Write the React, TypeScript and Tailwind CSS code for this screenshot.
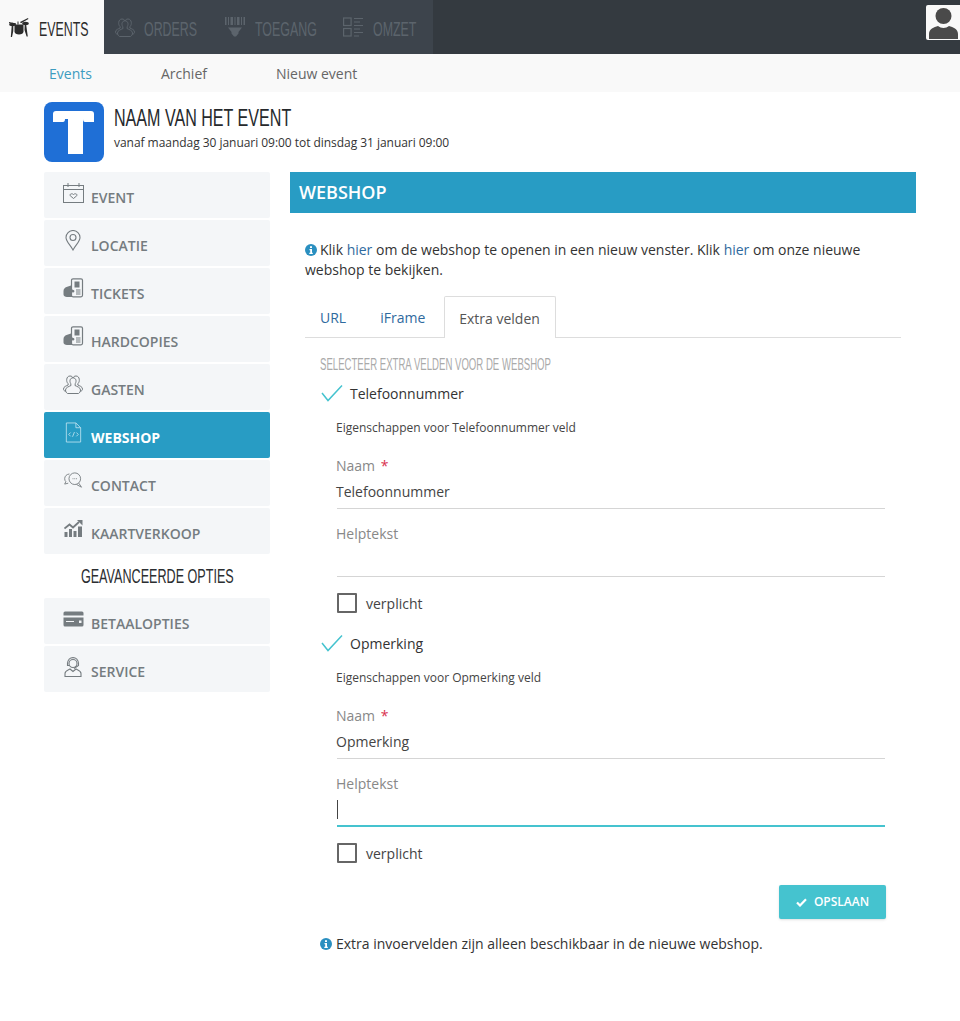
import React from "react"

function CalendarIcon() {
  return (
    <svg width="21" height="20" viewBox="0 0 21 20" fill="none" stroke="currentColor" strokeWidth="1">
      <rect x="0.5" y="2.5" width="20" height="17" />
      <path d="M0.5 6.5h20M5 0v4M16 0v4" />
      <path d="M10.500 15.500l-3.300-2.800c-1-1.400 1.500-2.800 3.300-1.200 1.800-1.600 4.300-.2 3.300 1.200z" />
    </svg>
  )
}

function PinIcon() {
  return (
    <svg width="16" height="21" viewBox="0 0 16 21" fill="none" stroke="currentColor" strokeWidth="1.1">
      <path d="M8 20C5 14.500 1 11.500 1 7.500a7 7 0 0 1 14 0C15 11.500 11 14.500 8 20z" />
      <circle cx="8" cy="7.500" r="3" />
    </svg>
  )
}

function TicketIcon() {
  return (
    <svg width="21" height="21" viewBox="0 0 21 21">
      <rect x="8.500" y="0.800" width="11" height="18" rx="1.500" fill="#f4f6f8" stroke="currentColor" strokeWidth="1.200" />
      <rect x="11.500" y="3.500" width="5" height="6" fill="currentColor" />
      <path d="M13 12h4.500M13 14h4.500M13 16h4.500" stroke="currentColor" strokeWidth="1" />
      <path d="M0.500 13c0-2 1.500-3.500 3-4L8 7.500v3.500l3 1.200c1 .8 0 2.500-1 2.200l-1-.2V19H4c-2 0-3.500-1-3.500-2.500z" fill="currentColor" />
    </svg>
  )
}

function GuestsIcon() {
  return (
    <svg width="20" height="19" viewBox="0 0 20 19" fill="none" stroke="currentColor" strokeWidth="1">
      <path d="M5 8.500C3 7 3 1 7 1c1.500 0 2.500.8 3 1.800C10.500 1.800 11.500 1 13 1c4 0 4 6 2 7.500" />
      <path d="M10 2.800c-3 0-3.800 3.500-2.300 5.700l.3 2c-2 1-5.500 2-5.500 4.500 0 1.500 1 3 2 3.500h11c1-.5 2-2 2-3.500 0-2.500-3.500-3.500-5.500-4.500l.3-2c1.500-2.200.7-5.700-2.300-5.700z" />
      <path d="M5 8.500l.2 1.500c-1.500.8-4.700 1.500-4.700 4 0 1 .5 1.800 1.500 2h1M15 8.500l-.2 1.500c1.500.8 4.700 1.500 4.700 4 0 1-.5 1.800-1.500 2h-1" />
    </svg>
  )
}

function CodeFileIcon() {
  return (
    <svg width="17" height="21" viewBox="0 0 17 22" fill="none" stroke="currentColor" strokeWidth="0.800">
      <path d="M1 1h10l5 5v15H1zM11 1v5h5" />
      <path d="M5.500 11l-2 2 2 2M11.500 11l2 2-2 2M9.500 10.500l-2 5" />
    </svg>
  )
}

function ChatIcon() {
  return (
    <svg width="20" height="17" viewBox="0 0 20 19" fill="none" stroke="currentColor" strokeWidth="1">
      <path d="M6 2.200C3 2.500.700 4.500.700 7.500c0 1.500.5 2.500 1.300 3.300L.700 13.500l4-1" />
      <circle cx="12" cy="7.500" r="6.500" />
      <path d="M16.500 12.500l3 4.500-5.500-3" />
      <path d="M9.500 7.500h1M11.500 7.500h1M13.500 7.500h1" />
    </svg>
  )
}

function ChartIcon() {
  return (
    <svg width="19" height="17" viewBox="0 0 19 17" fill="currentColor">
      <path d="M0.500 8.500L5.500 4.500l3.500 3L15 2" fill="none" stroke="currentColor" strokeWidth="1.800" />
      <path d="M13 0h5.500v5.500z" />
      <path d="M0.500 12h3v5h-3zM5 9h3v8H5zM9.500 11h3v6h-3zM14 6.500h4V17h-4z" />
    </svg>
  )
}

function CardIcon() {
  return (
    <svg width="21" height="16" viewBox="0 0 21 16" fill="currentColor">
      <path d="M2 0.500h17a1.500 1.500 0 0 1 1.500 1.500v2.500H.500V2A1.500 1.500 0 0 1 2 0.500z" />
      <path fillRule="evenodd" d="M0.500 6.500h20V14a1.500 1.500 0 0 1-1.500 1.500H2A1.500 1.500 0 0 1 .500 14zM3 10h8v1H3zm13-.500h2.500V12H16z" />
    </svg>
  )
}

function ServiceIcon() {
  return (
    <svg width="18" height="20" viewBox="0 0 18 20" fill="none" stroke="currentColor" strokeWidth="1.100">
      <circle cx="9" cy="6.500" r="4" />
      <path d="M3.500 7c0-8.500 11-8.500 11 0M3.500 5.500v3h2M14.500 5.500v3L10 11.500" />
      <path d="M6 12c-1.500 1-5 1.500-5 4.500v3h16v-3c0-3-3.500-3.500-5-4.500l-3 2.500z" />
    </svg>
  )
}

function DrumIcon() {
  return (
    <svg width="20" height="20" viewBox="0 0 20 20" fill="#2b2b2b">
      <path d="M0 5l7 1.500v1L0 6.200zM11 5l8-4 .4.900L12 6.300zM8.500 4.500h1v3h-1z" />
      <ellipse cx="3.500" cy="7.500" rx="3.300" ry="1.700" />
      <ellipse cx="16.500" cy="6.500" rx="3.300" ry="1.700" />
      <path d="M5.500 7.500h9v7c0 2-2 3-4.500 3s-4.500-1-4.500-3z" />
      <path d="M2.800 8h1.500v6L3 20H1.800zM15.700 8h1.500l1.600 11.500h-1.200L15.500 13z" />
    </svg>
  )
}

function BarcodeIcon() {
  return (
    <svg width="20" height="20" viewBox="0 0 20 20" fill="currentColor">
      <path d="M0 0h1.500v8H0zM3 0h1v8H3zM5.500 0h2.500v8H5.500zM9.500 0h1v8h-1zM12 0h2.500v8H12zM16 0h1v8h-1zM18.500 0H20v8h-1.500z" />
      <path d="M3 10.500h14l-3.500 4.500v1.500L11 19.500H9L6.500 16.500V15z" />
    </svg>
  )
}

function RevenueIcon() {
  return (
    <svg width="21" height="20" viewBox="0 0 21 20" fill="none" stroke="currentColor" strokeWidth="1.200">
      <rect x="0.600" y="1" width="7.500" height="7.500" />
      <rect x="0.600" y="11.500" width="7.500" height="7.500" />
      <path d="M11 1.500h9M11 5h6M11 8.500h9M11 12h6M11 15.500h9M11 19h5" />
    </svg>
  )
}

function InfoDot({ className }: { className: string }) {
  return (
    <svg width="12" height="12" viewBox="0 0 12 12" className={`inline-block mb-[2px] ${className}`}>
      <circle cx="6" cy="6" r="6" fill="#2a8fc0" />
      <path d="M5 2.200h2v1.800H5zM4.500 5h2.500v3.700h.8V10H4.300V8.700h.9V6.300h-.7z" fill="#fff" />
    </svg>
  )
}

const sideTop = [
  { label: "EVENT", icon: <CalendarIcon />, pl: "pl-[19px] pt-[11px]" },
  { label: "LOCATIE", icon: <PinIcon />, pl: "pl-[21px] pt-[10px]" },
  { label: "TICKETS", icon: <TicketIcon />, pl: "pl-[19px] pt-[10px]" },
  { label: "HARDCOPIES", icon: <TicketIcon />, pl: "pl-[19px] pt-[10px]" },
  { label: "GASTEN", icon: <GuestsIcon />, pl: "pl-[19px] pt-[11px]" },
  { label: "WEBSHOP", icon: <CodeFileIcon />, pl: "pl-[21px] pt-[10px]", active: true },
  { label: "CONTACT", icon: <ChatIcon />, pl: "pl-[19px] pt-[12px]" },
  { label: "KAARTVERKOOP", icon: <ChartIcon />, pl: "pl-[20px] pt-[12px]" },
]

const sideBottom = [
  { label: "BETAALOPTIES", icon: <CardIcon />, pl: "pl-[19px] pt-[13px]" },
  { label: "SERVICE", icon: <ServiceIcon />, pl: "pl-[20px] pt-[11px]" },
]

function SideItem({ label, icon, pl, active }: { label: string; icon: React.ReactNode; pl: string; active?: boolean }) {
  return (
    <div className={`h-[46px] rounded-[2px] flex ${active ? "bg-[#289cc4] text-[#cdeaf4]" : "bg-[#f4f6f8] text-[#757c80]"}`}>
      <div className={`w-[47px] shrink-0 ${pl}`}>{icon}</div>
      <div className={`pt-[16px] text-[14px] leading-[20px] ${active ? "text-white font-bold" : "font-semibold"}`}>{label}</div>
    </div>
  )
}

function FieldBlock({ name, focused }: { name: string; focused?: boolean }) {
  return (
    <div>
      <div className="flex items-center h-[30px] pl-[15px]">
        <svg width="24" height="18" viewBox="0 0 24 18" fill="none" stroke="#45c3cf" strokeWidth="1.500" className="shrink-0">
          <path d="M2 9l6 7.500L22 1.500" />
        </svg>
        <span className="ml-[6px] text-[14px] text-[#333]">{name}</span>
      </div>
      <p className="pl-[31px] mt-[11px] text-[12px] leading-[18px] text-[#444]">Eigenschappen voor {name} veld</p>
      <div className="pl-[32px] pr-[16px]">
        <div className="mt-[19px] ml-[-1px] text-[14px] leading-[20px] text-[#888]">
          Naam <span className="text-[#d9304f] ml-[2px]">*</span>
        </div>
        <div className="h-[33px] border-b border-[#d5d5d5] pt-[6px] text-[14px] leading-[20px] text-[#444]">
          <span className="ml-[-1px]">{name}</span>
        </div>
        <div className="mt-[15px] ml-[-1px] text-[14px] leading-[20px] text-[#888]">Helptekst</div>
        {focused ? (
          <div className="h-[33px] border-b-2 border-[#45c3cf] pt-[6px]">
            <div className="w-px h-[19px] bg-[#444]" />
          </div>
        ) : (
          <div className="h-[33px] border-b border-[#d5d5d5]" />
        )}
        <div className="flex items-center mt-[16px] h-[20px]">
          <div className="w-[20px] h-[20px] border-2 border-[#666] rounded-[1px]" />
          <span className="ml-[9px] text-[14px] text-[#444]">verplicht</span>
        </div>
      </div>
    </div>
  )
}

export default function App() {
  return (
    <div className="w-[960px] min-h-[1021px] bg-white font-['Open_Sans',sans-serif] overflow-hidden">
      {/* Top nav */}
      <div className="h-[54px] bg-[#343a40] flex justify-between">
        <div className="flex">
          <div className="w-[104px] shrink-0 bg-[#f9f9f9] flex items-center pl-[9px] text-[#2b2b2b]">
            <DrumIcon />
            <div className="ml-[10px] w-[49px] mt-[3px] whitespace-nowrap">
              <span className="inline-block origin-left scale-x-[0.62] font-['Liberation_Sans',sans-serif] text-[20px]">EVENTS</span>
            </div>
          </div>
          <div className="w-[329px] shrink-0 bg-[#3d444c] flex items-center text-[#5c646c] pl-[11px]">
            <GuestsIcon />
            <div className="ml-[9px] w-[54px] mt-[3px] whitespace-nowrap">
              <span className="inline-block origin-left scale-x-[0.62] font-['Liberation_Sans',sans-serif] text-[20px]">ORDERS</span>
            </div>
            <div className="ml-[27px] shrink-0"><BarcodeIcon /></div>
            <div className="ml-[10px] w-[61px] mt-[3px] whitespace-nowrap">
              <span className="inline-block origin-left scale-x-[0.62] font-['Liberation_Sans',sans-serif] text-[20px]">TOEGANG</span>
            </div>
            <div className="ml-[27px] shrink-0"><RevenueIcon /></div>
            <div className="ml-[9px] w-[44px] mt-[3px] whitespace-nowrap">
              <span className="inline-block origin-left scale-x-[0.62] font-['Liberation_Sans',sans-serif] text-[20px]">OMZET</span>
            </div>
          </div>
        </div>
        <div className="w-[34px] h-[35px] mt-[5px] bg-[#f9f9f9] rounded-l-[2px] flex items-end justify-center overflow-hidden">
          <svg width="31" height="33" viewBox="0 0 31 33" fill="#4a4a4a">
            <circle cx="15.500" cy="9" r="8" />
            <path d="M1 32v-5c0-5 5-7 9-8 3 2.500 8 2.500 11 0 4 1 9 3 9 8v5z" />
          </svg>
        </div>
      </div>
      {/* Sub nav */}
      <div className="h-[38px] bg-[#f9f9f9] flex items-center text-[14px] text-[#666] pl-[49px]">
        <span className="text-[#3d9cc0] w-[112px]">Events</span>
        <span className="w-[115px]">Archief</span>
        <span>Nieuw event</span>
      </div>
      {/* Event title */}
      <div className="flex pl-[44px] pt-[10px] h-[80px]">
        <div className="w-[60px] h-[60px] rounded-[8px] bg-[#1f6fd6] shrink-0">
          <svg width="60" height="60" viewBox="0 0 60 60" fill="#fff">
            <path d="M12 9h35q3 0 3 3v8h-9q-2 0-2-3H39v35H24V17h-3q0 3-2 3H9v-8q0-3 3-3z" />
          </svg>
        </div>
        <div className="ml-[10px]">
          <div className="w-[177px] h-[32px] whitespace-nowrap">
            <span className="inline-block origin-left scale-x-[0.67] font-['Liberation_Sans',sans-serif] text-[24px] leading-[32px] text-[#26292c]">NAAM VAN HET EVENT</span>
          </div>
          <div className="text-[12px] leading-[18px] text-[#333] tracking-[-0.04px]">vanaf maandag 30 januari 09:00 tot dinsdag 31 januari 09:00</div>
        </div>
      </div>
      <div className="flex pl-[44px]">
        {/* Sidebar */}
        <div className="w-[226px] shrink-0 flex flex-col gap-[2px]">
          {sideTop.map((s) => (
            <SideItem key={s.label} {...s} />
          ))}
          <div className="h-[40px] flex items-center justify-center whitespace-nowrap">
            <span className="inline-block origin-center scale-x-[0.63] font-['Liberation_Sans',sans-serif] text-[20px] text-[#2b2e31]">GEAVANCEERDE OPTIES</span>
          </div>
          {sideBottom.map((s) => (
            <SideItem key={s.label} {...s} />
          ))}
        </div>
        {/* Main */}
        <div className="ml-[20px] w-[626px] shrink-0">
          <div className="h-[41px] bg-[#289cc4] text-white font-semibold text-[18px] flex items-center pl-[9px]">WEBSHOP</div>
          <div className="px-[15px]">
            <p className="mt-[27px] text-[14px] leading-[20px] text-[#333]">
              <InfoDot className="mr-[3px]" />
              Klik <span className="text-[#2f6a9e]">hier</span> om de webshop te openen in een nieuw venster. Klik <span className="text-[#2f6a9e]">hier</span> om onze nieuwe webshop te bekijken.
            </p>
            <div className="mt-[16px] h-[42px] flex border-b border-[#ddd] text-[14px]">
              <div className="px-[15px] pt-[11px] text-[#2f6a9e]">URL</div>
              <div className="px-[19px] pt-[11px] text-[#2f6a9e]">iFrame</div>
              <div className="h-[42px] pl-[14px] pr-[15px] pt-[11px] bg-white border border-b-0 border-[#ddd] rounded-t-[2px] text-[#555]">Extra velden</div>
            </div>
            <div className="mt-[14px] pl-[15px] h-[20px] whitespace-nowrap">
              <span className="inline-block origin-left scale-x-[0.6] font-['Liberation_Sans',sans-serif] text-[16px] leading-[20px] text-[#aaa]">SELECTEER EXTRA VELDEN VOOR DE WEBSHOP</span>
            </div>
            <div className="mt-[6px]">
              <FieldBlock name="Telefoonnummer" />
            </div>
            <div className="mt-[15px]">
              <FieldBlock name="Opmerking" focused />
            </div>
            <div className="flex justify-end pr-[15px] mt-[22px]">
              <div className="w-[107px] h-[34px] bg-[#45c3cf] rounded-[2px] shadow-sm text-white text-[12px] font-semibold flex items-center justify-center gap-[7px]">
                <svg width="11" height="9" viewBox="0 0 11 9" fill="none" stroke="#fff" strokeWidth="2.200">
                  <path d="M1 4.500l3 3L10 1.200" />
                </svg>
                OPSLAAN
              </div>
            </div>
            <p className="mt-[15px] pl-[15px] text-[14px] leading-[20px] text-[#333]">
              <InfoDot className="mr-[4px]" />
              Extra invoervelden zijn alleen beschikbaar in de nieuwe webshop.
            </p>
          </div>
        </div>
      </div>
    </div>
  )
}
